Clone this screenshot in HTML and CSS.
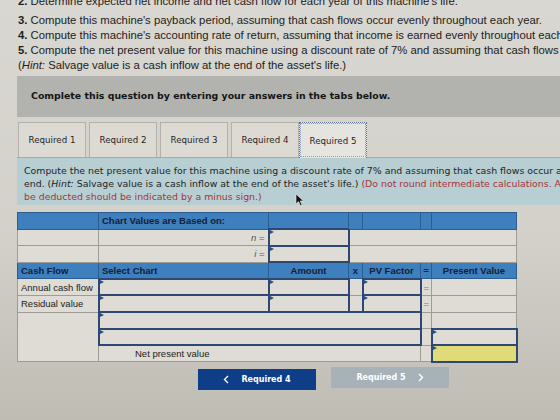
FILE: index.html
```html
<!DOCTYPE html>
<html lang="en">
	<head>
		<meta charset="UTF-8">
		<meta name="viewport" content="width=device-width, initial-scale=1.0">
		<title>Required 5</title>
		<link rel="stylesheet" href="styles.css">
	</head>
	<body>

		<div class="page">
			<div class="prompt">
				<p><b>2.</b> Determine expected net income and net cash flow for each year of this machine's life.</p>
				<p><b>3.</b> Compute this machine's payback period, assuming that cash flows occur evenly throughout each year.</p>
				<p><b>4.</b> Compute this machine's accounting rate of return, assuming that income is earned evenly throughout each year.</p>
				<p><b>5.</b> Compute the net present value for this machine using a discount rate of 7% and assuming that cash flows occur at each year-end.</p>
				<p>(<i>Hint:</i> Salvage value is a cash inflow at the end of the asset's life.)</p>
			</div>

			<div class="banner">Complete this question by entering your answers in the tabs below.</div>

			<div class="tabs">
				<span class="tab">Required 1</span>
				<span class="tab">Required 2</span>
				<span class="tab">Required 3</span>
				<span class="tab">Required 4</span>
				<span class="tab active">Required 5</span>
			</div>

			<div class="instructions">
				<p>Compute the net present value for this machine using a discount rate of 7% and assuming that cash flows occur at each year-</p>
				<p>end. (<i>Hint:</i> Salvage value is a cash inflow at the end of the asset's life.) <span class="warn">(Do not round intermediate calculations. Amounts to</span></p>
				<p class="warn">be deducted should be indicated by a minus sign.)</p>
				<svg class="cursor" width="10" height="14" viewBox="0 0 10 14">
					<path d="M1 1 L1 11 L3.5 8.6 L5.4 12.6 L7 11.9 L5.2 8 L8.4 8 Z" fill="#111" stroke="#eee" stroke-width="0.6"/>
				</svg>
			</div>

			<table class="npv">
				<colgroup>
					<col style="width: 81px">
					<col style="width: 170px">
					<col style="width: 80px">
					<col style="width: 14px">
					<col style="width: 58px">
					<col style="width: 11px">
					<col style="width: 85px">
				</colgroup>
				<tr class="head">
					<td></td>
					<td>Chart Values are Based on:</td>
					<td></td><td></td><td></td><td></td><td></td>
				</tr>
				<tr>
					<td></td>
					<td class="sym"><i>n</i> =</td>
					<td class="inp"></td>
					<td colspan="4"></td>
				</tr>
				<tr>
					<td></td>
					<td class="sym"><i>i</i> =</td>
					<td class="inp"></td>
					<td colspan="4"></td>
				</tr>
				<tr class="head">
					<td>Cash Flow</td>
					<td>Select Chart</td>
					<td class="mid">Amount</td>
					<td class="mid">x</td>
					<td class="mid">PV Factor</td>
					<td class="mid">=</td>
					<td class="mid">Present Value</td>
				</tr>
				<tr>
					<td>Annual cash flow</td>
					<td class="inp"></td>
					<td class="inp"></td>
					<td></td>
					<td class="inp"></td>
					<td class="eq">=</td>
					<td></td>
				</tr>
				<tr>
					<td>Residual value</td>
					<td class="inp"></td>
					<td class="inp"></td>
					<td></td>
					<td class="inp"></td>
					<td class="eq">=</td>
					<td></td>
				</tr>
				<tr>
					<td rowspan="3"></td>
					<td colspan="4" class="inp"></td>
					<td></td>
					<td></td>
				</tr>
				<tr>
					<td colspan="4" class="inp"></td>
					<td></td>
					<td class="inp"></td>
				</tr>
				<tr>
					<td colspan="4" class="total">Net present value</td>
					<td></td>
					<td class="inp result"></td>
				</tr>
			</table>

			<div class="nav">
				<button class="prev">
					<svg width="6" height="9" viewBox="0 0 6 9"><path d="M5 1 L1.5 4.5 L5 8" fill="none" stroke="currentColor" stroke-width="1.4"/></svg>
					Required 4
				</button>
				<button class="next" disabled>
					Required 5
					<svg width="6" height="9" viewBox="0 0 6 9"><path d="M1 1 L4.5 4.5 L1 8" fill="none" stroke="currentColor" stroke-width="1.4"/></svg>
				</button>
			</div>
		</div>

	</body>
</html>
```

FILE: styles.css
```css
* {
    box-sizing: border-box;
    margin: 0;
    padding: 0;
}
body {
    width: 560px;
    height: 420px;
    overflow: hidden;
    background: linear-gradient(180deg, #d9d7d1 0%, #d3d1ca 55%, #bfbcb4 100%);
    font-family: 'Liberation Sans', Arial, sans-serif;
    color: #1b1b1b;
}
.page {
    width: 620px;
    padding-left: 17px;
}

/* question text, first line scrolled partly out of view */
.prompt {
    padding-left: 1px;
    font-size: 11.3px;
    line-height: 15px;
    color: #222;
}
.prompt p {
    white-space: nowrap;
}
.prompt p:first-child {
    margin: -6px 0 4px;
}

.banner {
    margin-top: 3px;
    height: 41px;
    padding: 14px 0 0 14px;
    background-color: #b2b2af;
    font-family: 'DejaVu Sans', Verdana, sans-serif;
    font-size: 9.4px;
    font-weight: bold;
    color: #141414;
}

/* tabs */
.tabs {
    display: flex;
    align-items: flex-end;
    height: 41px;
    padding-left: 1px;
    border-bottom: 1px solid #a9a8a3;
}
.tab {
    width: 68px;
    height: 35px;
    margin-right: 3px;
    display: flex;
    align-items: center;
    justify-content: center;
    background-color: #dcdad3;
    border: 1px solid #b3b1ab;
    border-bottom: none;
    font-family: 'DejaVu Sans', Verdana, sans-serif;
    font-size: 8.7px;
    color: #262626;
}
.tab:nth-child(4) {
    margin-right: 0;
}
.tab.active {
    height: 36px;
    margin-bottom: -1px;
    background-color: #e6e4de;
    border: 1px dotted #5b7395;
    border-bottom: none;
    outline: 1px dotted #8aa0bd;
    outline-offset: -2px;
}

.instructions {
    position: relative;
    height: 47px;
    padding: 6px 0 0 7px;
    background-color: #b7cfd3;
    font-family: 'DejaVu Sans', Verdana, sans-serif;
    font-size: 9.4px;
    line-height: 13px;
    color: #1e2426;
}
.instructions p {
    white-space: nowrap;
}
.warn {
    color: #a8323c;
}
.cursor {
    position: absolute;
    left: 278px;
    top: 35px;
}

/* present value table */
.npv {
    margin-top: 7px;
    width: 499px;
    table-layout: fixed;
    border-collapse: collapse;
    font-size: 9.5px;
    color: #222;
}
.npv td {
    position: relative;
    height: 16.6px;
    padding: 0 3px;
    background-color: #dedcd4;
    border: 1px solid #9e9c96;
    white-space: nowrap;
    overflow: hidden;
}
.npv .head td {
    background-color: #3e7fbd;
    border-color: #2b5d92;
    font-weight: bold;
    color: #142034;
}
.npv .head td.mid,
.npv td.eq {
    text-align: center;
    padding: 0;
}
.npv td.eq {
    color: #777;
}
.npv td.sym {
    text-align: right;
    color: #555;
}
.npv td.inp {
    border: 2px solid #2d4872;
}
.npv td.inp::before {
    content: "";
    position: absolute;
    left: 0;
    top: 0;
    border-left: 4px solid #1f4f96;
    border-top: 2.5px solid transparent;
    border-bottom: 2.5px solid transparent;
}
.npv td.result {
    background-color: #dedb78;
}
.npv td.total {
    padding-left: 36px;
}

/* prev / next */
.nav {
    display: flex;
    gap: 15px;
    margin-top: 6px;
    padding-left: 181px;
}
.nav button {
    width: 118px;
    height: 21px;
    display: flex;
    align-items: center;
    justify-content: center;
    gap: 12px;
    border: none;
    font-family: 'DejaVu Sans', Verdana, sans-serif;
    font-size: 8px;
    font-weight: bold;
    color: #fff;
}
.prev {
    background-color: #0e3e87;
}
.next {
    margin-top: -2px;
    background-color: #a7b1b8;
    color: #d3d8dc;
}
```
